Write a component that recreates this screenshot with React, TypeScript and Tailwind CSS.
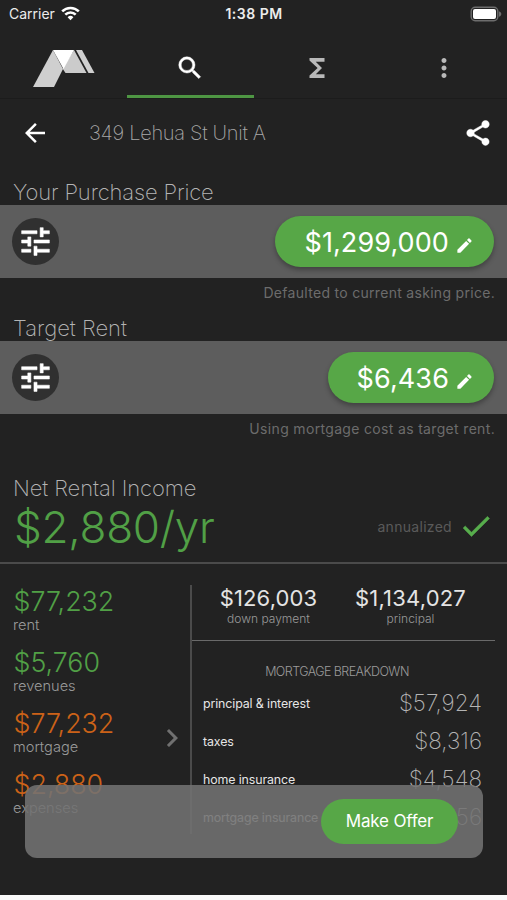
import clsx from 'clsx';
import {
  MdArrowBack,
  MdCheck,
  MdChevronRight,
  MdEdit,
  MdFunctions,
  MdMoreVert,
  MdSearch,
  MdShare,
  MdTune,
} from 'react-icons/md';

const summary = [
  { amount: '$77,232', label: 'rent', color: 'text-[#51a046]' },
  { amount: '$5,760', label: 'revenues', color: 'text-[#51a046]' },
  { amount: '$77,232', label: 'mortgage', color: 'text-[#cc6218]' },
  { amount: '$2,880', label: 'expenses', color: 'text-[#cc6218]' },
];

const breakdown = [
  { label: 'principal & interest', amount: '$57,924' },
  { label: 'taxes', amount: '$8,316' },
  { label: 'home insurance', amount: '$4,548' },
  { label: 'mortgage insurance', amount: '$6,456' },
];

// only the last path is the glyph, the first one is the icon's empty frame
const boldIcon = '[&>path:last-child]:[stroke-width:0.35px]';

function StatusBar() {
  return (
    <div className="grid grid-cols-3 items-center h-[27px] px-[9px] text-[14px] text-[#ececec]">
      <div className="flex items-center gap-[6px]">
        <span>Carrier</span>
        <svg width="19" height="15" viewBox="0 0 19 15" fill="none" stroke="#fff" strokeWidth="2.6">
          <path d="M1.2 5.4a11.8 11.8 0 0 1 16.6 0" />
          <path d="M4.3 8.7a7.4 7.4 0 0 1 10.4 0" />
          <path d="M9.5 14.2 6.6 11.2a4.1 4.1 0 0 1 5.8 0Z" fill="#fff" stroke="none" />
        </svg>
      </div>
      <span className="pl-px text-center font-semibold tracking-[0.5px]">1:38 PM</span>
      <svg className="justify-self-end -mr-[4px]" width="32" height="16" viewBox="0 0 32 16">
        <rect x="1.2" y="1.2" width="26.6" height="13.6" rx="4" fill="none" stroke="#6d6d6d" strokeWidth="1.4" />
        <rect x="3" y="3" width="23" height="10" rx="2" fill="#fff" />
        <path d="M29 5.2c1.8.8 2.3 1.8 2.3 2.8s-.5 2-2.3 2.8Z" fill="#6d6d6d" />
      </svg>
    </div>
  );
}

function Logo() {
  return (
    <svg width="64" height="40" viewBox="0 0 64 40">
      <path d="M21 1 31 20 22 38H1Z" fill="#cfcfcf" />
      <path d="M42 1 54.5 24H33.500L30.500 19.500Z" fill="#cbcbcb" />
      <path d="M21 1H42L31.500 20Z" fill="#fff" />
      <path d="M44 1H50L62.500 24H56.500Z" fill="#cfcfcf" />
    </svg>
  );
}

function PriceRow({
  title,
  price,
  note,
  titleClass,
  noteClass,
}: {
  title: string;
  price: string;
  note: string;
  titleClass?: string;
  noteClass?: string;
}) {
  return (
    <section>
      <h2 className={clsx('h-[25px] pl-[13px] leading-[25px] text-[22px] font-extralight text-[#b4b4b4]', titleClass)}>
        {title}
      </h2>
      <div className="flex items-center justify-between h-[73px] pl-[12px] pr-[13px] bg-[#5d5d5d]">
        <button className="flex items-center justify-center size-[47px] rounded-full bg-[#303030] text-white">
          <MdTune size={37} className={boldIcon} />
        </button>
        <button className="flex items-center h-[51px] pl-[29px] pr-[20px] gap-[6px] rounded-full bg-[#57a747] text-white shadow-[0_3px_5px_rgba(0,0,0,0.3)]">
          <span className="pt-[3px] text-[27px] tracking-[0.1px]">{price}</span>
          <MdEdit size={19} className="mt-[7px]" />
        </button>
      </div>
      <p className={clsx('pr-[12px] pt-[5px] leading-[20px] text-right text-[14px] text-[#6c6c6c]', noteClass)}>
        {note}
      </p>
    </section>
  );
}

export default function App() {
  return (
    <div className="relative w-[507px] h-[900px] overflow-hidden bg-[#fafafa] font-[Inter,'Liberation_Sans',sans-serif]">
      <div className="h-[895px] overflow-hidden bg-[#222222]">
        <StatusBar />

        <nav className="grid grid-cols-4 h-[72px] border-b border-[#1c1c1c] text-[#b9b9b9]">
          <div className="flex items-center justify-center pt-[12px] pl-[2px]">
            <Logo />
          </div>
          <div className="flex items-center justify-center pt-[13px] border-b-[3px] border-[#4e9643] text-white">
            <MdSearch size={30} className={boldIcon} />
          </div>
          <div className="flex items-center justify-center pt-[10px]">
            <MdFunctions size={30} />
          </div>
          <div className="flex items-center justify-center pt-[10px]">
            <MdMoreVert size={30} />
          </div>
        </nav>

        <header className="flex items-center h-[68px] pl-[20px] pr-[14px]">
          <MdArrowBack size={30} className="text-white" />
          <h1 className="ml-[39px] flex-1 text-[20px] tracking-[-0.3px] font-extralight text-[#a8a8a8]">
            349 Lehua St Unit A
          </h1>
          <MdShare size={30} className={clsx('text-white', boldIcon)} />
        </header>

        <div className="pt-[13px]">
          <PriceRow
            title="Your Purchase Price"
            price="$1,299,000"
            note="Defaulted to current asking price."
            titleClass="tracking-[-0.15px]"
            noteClass="h-[38px] tracking-[0.3px]"
          />
          <PriceRow
            title="Target Rent"
            price="$6,436"
            note="Using mortgage cost as target rent."
            noteClass="h-[37px] tracking-[0.33px]"
          />
        </div>

        <section className="flex items-start justify-between h-[113px] pt-[24px] pl-[13px] pr-[13px] border-b-2 border-[#4b4b4b]">
          <div>
            <h2 className="leading-[26px] text-[22px] tracking-[-0.1px] font-extralight text-[#b4b4b4]">
              Net Rental Income
            </h2>
            <div className="pl-[1px] leading-[52px] text-[44px] tracking-[-0.25px] font-light text-[#51a046]">
              $2,880/yr
            </div>
          </div>
          <div className="flex items-center gap-[6px] mt-[33px]">
            <span className="text-[14px] tracking-[0.3px] text-[#5a5a5a]">annualized</span>
            <MdCheck size={36} className={clsx('text-[#57ad4c]', boldIcon)} />
          </div>
        </section>

        <section className="flex h-[331px] pr-[12px]">
          <div className="flex w-[190px] items-center justify-between pl-[13px]">
            <div className="self-start pt-[20px]">
              {summary.map((item) => (
                <div key={item.label} className="h-[61px]">
                  <div className={clsx('pl-[0.5px] leading-[34px] text-[26.8px] font-light', item.color)}>
                    {item.amount}
                  </div>
                  <div className="leading-[14px] text-[14.6px] font-light text-[#9a9a9a]">{item.label}</div>
                </div>
              ))}
            </div>
            <MdChevronRight size={36} className="mt-[17px] text-[#707070]" />
          </div>

          <div className="flex-1 h-[249px] mt-[21px] border-l-2 border-[#4b4b4b]">
            <div className="flex h-[56px] pl-[8px] pr-[14px] border-b border-[#6a6a6a] text-center">
              <div className="w-[137px]">
                <div className="leading-[27px] text-[22px] tracking-[0.1px] text-[#e4e4e4]">$126,003</div>
                <div className="leading-[14px] text-[12px] font-light text-[#9a9a9a]">down payment</div>
              </div>
              <div className="flex-1 pl-[3px]">
                <div className="leading-[27px] text-[22px] tracking-[0.2px] text-[#e4e4e4]">$1,134,027</div>
                <div className="leading-[14px] text-[12px] font-light text-[#9a9a9a]">principal</div>
              </div>
            </div>
            <h3 className="mt-[22px] pr-[13px] leading-[18px] text-center text-[12.5px] tracking-[-0.55px] font-light text-[#9a9a9a]">
              MORTGAGE BREAKDOWN
            </h3>
            <div className="mt-[3px] pl-[11px] pr-[13px]">
              {breakdown.map((row) => (
                <div key={row.label} className="flex items-center justify-between h-[38px]">
                  <span className="pt-[2px] text-[12.4px] tracking-[-0.12px] text-[#e6e6e6]">{row.label}</span>
                  <span className="text-[22.5px] font-extralight text-[#b4b4b4]">{row.amount}</span>
                </div>
              ))}
            </div>
          </div>
        </section>
      </div>

      {/* floating offer bar, stays over the figures */}
      <div className="absolute left-[25px] top-[785px] flex items-center justify-end w-[458px] h-[73px] pr-[25px] rounded-[12px] bg-[#727272]/88">
        <button className="w-[137px] h-[45px] pt-px rounded-full bg-[#57a747] text-[17px] tracking-[-0.2px] text-white">
          Make Offer
        </button>
      </div>
    </div>
  );
}
